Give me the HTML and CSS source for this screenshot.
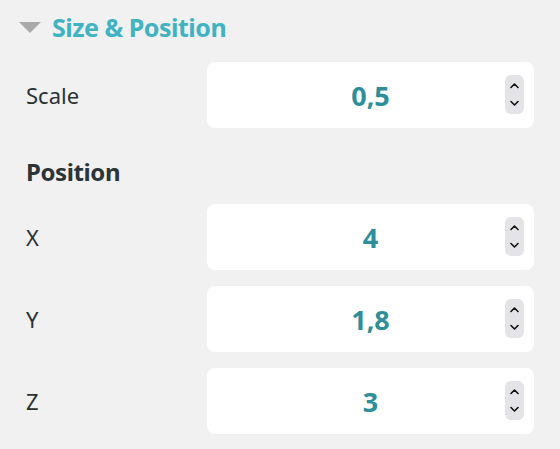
FILE: index.html
```html
<!DOCTYPE html>
<html lang="en">
<head>
  <meta charset="UTF-8">
  <title>Size &amp; Position</title>
  <link rel="stylesheet" href="styles.css">
</head>
<body>

  <div class="panel">
    <div class="section-header">
      <span class="caret"></span>
      <h2>Size &amp; Position</h2>
    </div>

    <div class="field">
      <label>Scale</label>
      <div class="number-box">
        <span class="value">0,5</span>
        <div class="spinner">
          <svg width="19" height="39" viewBox="0 0 19 39">
            <path d="M6 12.5 L9.5 9 L13 12.5" />
            <path d="M6 26.5 L9.5 30 L13 26.5" />
          </svg>
        </div>
      </div>
    </div>

    <h3 class="group-title">Position</h3>

    <div class="field">
      <label>X</label>
      <div class="number-box">
        <span class="value">4</span>
        <div class="spinner">
          <svg width="19" height="39" viewBox="0 0 19 39">
            <path d="M6 12.5 L9.5 9 L13 12.5" />
            <path d="M6 26.5 L9.5 30 L13 26.5" />
          </svg>
        </div>
      </div>
    </div>

    <div class="field">
      <label>Y</label>
      <div class="number-box">
        <span class="value">1,8</span>
        <div class="spinner">
          <svg width="19" height="39" viewBox="0 0 19 39">
            <path d="M6 12.5 L9.5 9 L13 12.5" />
            <path d="M6 26.5 L9.5 30 L13 26.5" />
          </svg>
        </div>
      </div>
    </div>

    <div class="field">
      <label>Z</label>
      <div class="number-box">
        <span class="value">3</span>
        <div class="spinner">
          <svg width="19" height="39" viewBox="0 0 19 39">
            <path d="M6 12.5 L9.5 9 L13 12.5" />
            <path d="M6 26.5 L9.5 30 L13 26.5" />
          </svg>
        </div>
      </div>
    </div>
  </div>

</body>
</html>
```

FILE: styles.css
```css
body {
  margin: 0;
  background: #f1f1f1;
  font-family: "Noto Sans", "Open Sans", sans-serif;
  color: #333;
}

.panel {
  padding: 0 26px;
}

.section-header {
  display: flex;
  align-items: center;
  height: 54px;
  margin-left: -7px;
}

.caret {
  width: 0;
  height: 0;
  border-left: 11px solid transparent;
  border-right: 11px solid transparent;
  border-top: 11px solid #aaaaaa;
  margin-right: 11px;
}

.section-header h2 {
  margin: 0;
  font-size: 25px;
  font-weight: bold;
  letter-spacing: -0.5px;
  color: #40b3c3;
}

.field {
  display: flex;
  align-items: center;
  margin-top: 16px;
}

.section-header + .field {
  margin-top: 8px;
}

.field label {
  width: 181px;
  font-size: 22px;
  color: #2a3134;
}

.number-box {
  flex: 1;
  height: 66px;
  background: #fff;
  border-radius: 8px;
  display: flex;
  align-items: center;
  justify-content: center;
  position: relative;
}

.value {
  font-size: 27px;
  font-weight: bold;
  color: #2e8e99;
}

.spinner {
  position: absolute;
  right: 10px;
  top: 13px;
  width: 19px;
  height: 39px;
  background: #e4e4e8;
  border-radius: 6px;
}

.spinner svg path {
  fill: none;
  stroke: #111;
  stroke-width: 1.6;
  stroke-linecap: round;
  stroke-linejoin: round;
}

.group-title {
  margin: 28px 0 0;
  line-height: 32px;
  font-size: 24px;
  font-weight: bold;
  letter-spacing: -0.4px;
  color: #2b3437;
}
```
